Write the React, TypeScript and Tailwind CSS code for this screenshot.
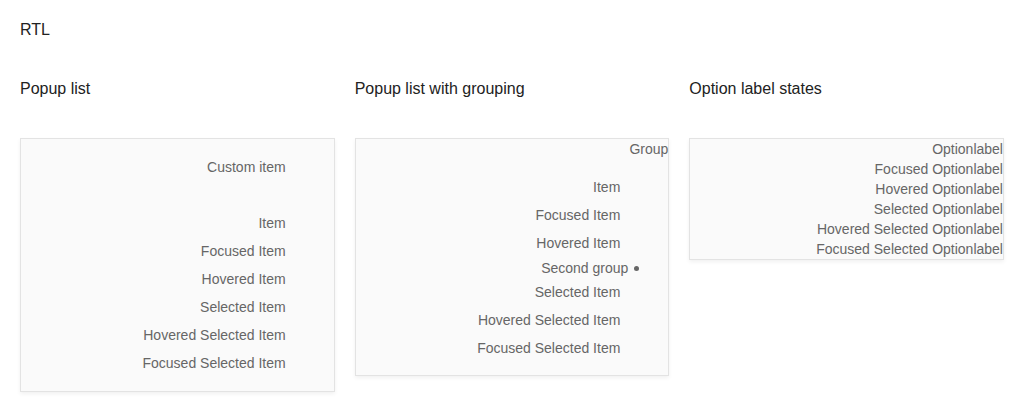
const items = ['Item', 'Focused Item', 'Hovered Item', 'Selected Item', 'Hovered Selected Item', 'Focused Selected Item'];

const labels = [
  'Optionlabel',
  'Focused Optionlabel',
  'Hovered Optionlabel',
  'Selected Optionlabel',
  'Hovered Selected Optionlabel',
  'Focused Selected Optionlabel',
];

const boxClass =
  'border border-[#e3e3e3] bg-[#fafafa] shadow-[0_2px_4px_rgba(0,0,0,0.06)] text-[14px] text-[#666]';

function Row({ children }: { children: React.ReactNode }) {
  return <div className="h-7 leading-7 pr-12">{children}</div>;
}

export default function App() {
  return (
    <div className="min-h-screen bg-white px-5 pt-5 font-['Liberation_Sans',Arial,sans-serif] text-[#222]">
      <div className="text-[16px] leading-5">RTL</div>

      <div className="grid grid-cols-3 gap-5 mt-[39px] items-start">
        {/* Popup list */}
        <div>
          <h2 className="text-[16px] leading-5 mb-[39px]">Popup list</h2>
          <div dir="rtl" className={`${boxClass} py-[14px]`}>
            <Row>Custom item</Row>
            <div className="h-7" />
            {items.map((t) => (
              <Row key={t}>{t}</Row>
            ))}
          </div>
        </div>

        {/* Popup list with grouping */}
        <div>
          <h2 className="text-[16px] leading-5 mb-[39px]">Popup list with grouping</h2>
          <div dir="rtl" className={boxClass}>
            <div className="leading-5">Group</div>
            <div className="pt-[14px] pb-[13px]">
              {items.slice(0, 3).map((t) => (
                <Row key={t}>{t}</Row>
              ))}
              <div className="flex items-center gap-[6px] leading-5 pr-[29px] mt-px">
                <span className="w-[5px] h-[5px] rounded-full bg-[#666]" />
                <span>Second group</span>
              </div>
              {items.slice(3).map((t) => (
                <Row key={t}>{t}</Row>
              ))}
            </div>
          </div>
        </div>

        {/* Option label states */}
        <div>
          <h2 className="text-[16px] leading-5 mb-[39px]">Option label states</h2>
          <div dir="rtl" className={boxClass}>
            {labels.map((t) => (
              <div key={t} className="leading-5">
                {t}
              </div>
            ))}
          </div>
        </div>
      </div>
    </div>
  );
}
